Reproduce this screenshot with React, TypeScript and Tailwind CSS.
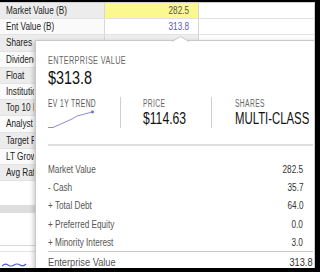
import React from 'react';

const bgRows = [
  'Market Value (B)',
  'Ent Value (B)',
  'Shares Out (B)',
  'Dividend Yield',
  'Float',
  'Institutional Own',
  'Top 10 Holders',
  'Analyst Rating',
  'Target Price',
  'LT Growth Rate',
  'Avg Rating',
];

const bridge = [
  { label: 'Market Value', value: '282.5' },
  { label: '- Cash', value: '35.7' },
  { label: '+ Total Debt', value: '64.0' },
  { label: '+ Preferred Equity', value: '0.0' },
  { label: '+ Minority Interest', value: '3.0' },
];

// the source UI uses a narrow face; squeeze Arial-metric text to match
const T: React.FC<{ className?: string; children: React.ReactNode }> = ({ className = '', children }) => (
  <span className={`inline-block whitespace-nowrap ${className}`}>{children}</span>
);

const Sparkline: React.FC = () => (
  <svg width="48" height="20" viewBox="0 0 48 20" className="mt-[1px]">
    <polyline
      points="0,17.5 5,17.5 14,13.5 24,9 29,6 35,4.5 44,2"
      fill="none"
      stroke="#8a8ad8"
      strokeWidth="1"
    />
    <circle cx="44.5" cy="2" r="1.4" fill="#6a6ac8" />
  </svg>
);

const App: React.FC = () => {
  return (
    <div className="w-[320px] h-[272px] bg-black pt-[2px] pr-[5px] pb-[4px] overflow-hidden font-['Liberation_Sans',Arial,sans-serif]">
      <div className="relative h-full bg-white border-t border-r border-[#cfcfcf] overflow-hidden">
        {/* Underlying data table */}
        <div className="flex flex-col">
          {bgRows.map((label, i) => (
            <div key={label} className="flex h-[16.2px] border-b border-[#e2e2e2]">
              <div
                className={`w-[105px] border-r border-[#d6d6d6] pl-[6px] text-[10px] leading-[15px] text-[#222] overflow-hidden ${
                  i % 2 === 0 ? 'bg-[#ececec]' : 'bg-[#fafafa]'
                }`}
              >
                <div className={i > 1 ? 'w-[28px] overflow-hidden' : ''}>
                  <T className="origin-left scale-x-[0.82]">{label}</T>
                </div>
              </div>
              <div
                className={`w-[94px] border-r border-[#d6d6d6] pr-[9px] text-right text-[10px] leading-[15px] ${
                  i === 0 ? 'bg-[#faf88e] text-[#555]' : i % 2 === 0 ? 'bg-[#eeeeee]' : 'bg-white text-[#5b5bb0]'
                }`}
              >
                {i < 2 && <T className="origin-right scale-x-[0.82]">{i === 0 ? '282.5' : '313.8'}</T>}
              </div>
            </div>
          ))}
          <div className="h-[24px]" />
          <div className="w-[105px] h-[8px] bg-[#dedede]" />
          <div className="h-[32px]" />
          <div className="w-[105px] h-px bg-[#d8d8d8]" />
          <div className="h-[5px]" />
          <div className="w-[105px] h-px bg-[#e4e4e4]" />
          <svg width="30" height="10" viewBox="0 0 30 10" className="mt-[8px] ml-[2px]">
            <path d="M0 6 Q3 3 6 5 T12 5 T18 5 T24 4" fill="none" stroke="#4a5fc0" strokeWidth="1.2" />
          </svg>
        </div>

        {/* Enterprise value popover */}
        <div className="absolute left-[35px] top-[37px] w-[300px] h-[260px] bg-white border border-[#c8c8c8] shadow-[-2px_1px_4px_rgba(0,0,0,0.18)] pl-[12px] pr-[21px]">
          <svg width="17" height="6" viewBox="0 0 17 6" className="absolute left-[136px] -top-[5px]">
            <polygon points="0,5.5 8.5,0.5 17,5.5" fill="#ffffff" />
            <polyline points="0,5.5 8.5,0.5 17,5.5" fill="none" stroke="#c8c8c8" strokeWidth="1" />
          </svg>

          <div className="pt-[13px] text-[11px] leading-[12px] tracking-[0.6px] text-[#666]">
            <T className="origin-left scale-x-[0.66]">ENTERPRISE VALUE</T>
          </div>
          <div className="mt-[2px] text-[18px] leading-[20px] text-[#111]">
            <T className="origin-left scale-x-[0.8]">$313.8</T>
          </div>

          <div className="mt-[9px] flex h-[31px]">
            <div className="w-[73px] shrink-0 border-r border-[#cfcfcf] pt-[1px]">
              <div className="text-[10px] leading-[11px] tracking-[0.6px] text-[#555]">
                <T className="origin-left scale-x-[0.67]">EV 1Y TREND</T>
              </div>
              <Sparkline />
            </div>
            <div className="w-[91px] shrink-0 border-r border-[#cfcfcf] pl-[22px] pt-[1px]">
              <div className="text-[10px] leading-[11px] tracking-[0.6px] text-[#666]">
                <T className="origin-left scale-x-[0.67]">PRICE</T>
              </div>
              <div className="mt-[1px] text-[16px] leading-[18px] text-[#111]">
                <T className="origin-left scale-x-[0.76]">$114.63</T>
              </div>
            </div>
            <div className="min-w-0 flex-1 pl-[23px] pt-[1px]">
              <div className="text-[10px] leading-[11px] tracking-[0.6px] text-[#666]">
                <T className="origin-left scale-x-[0.67]">SHARES</T>
              </div>
              <div className="mt-[1px] text-[16px] leading-[18px] text-[#111]">
                <T className="origin-left scale-x-[0.71]">MULTI-CLASS</T>
              </div>
            </div>
          </div>

          <div className="mt-[16px] h-[2px] bg-[#e0e0e0]" />

          <div className="mt-[14px] flex flex-col">
            {bridge.map((row) => (
              <div key={row.label} className="flex h-[18.3px] items-center justify-between pr-[10px] text-[10px] text-[#555]">
                <T className="origin-left scale-x-[0.82]">{row.label}</T>
                <T className="origin-right scale-x-[0.82] text-[#333]">{row.value}</T>
              </div>
            ))}
          </div>
          <div className="h-px bg-[#c8c8c8]" />
          <div className="flex h-[20px] items-center justify-between text-[11px] text-[#555]">
            <T className="origin-left scale-x-[0.84]">Enterprise Value</T>
            <T className="origin-right scale-x-[0.84] text-[#333]">313.8</T>
          </div>
        </div>
      </div>
    </div>
  );
};

export default App;
